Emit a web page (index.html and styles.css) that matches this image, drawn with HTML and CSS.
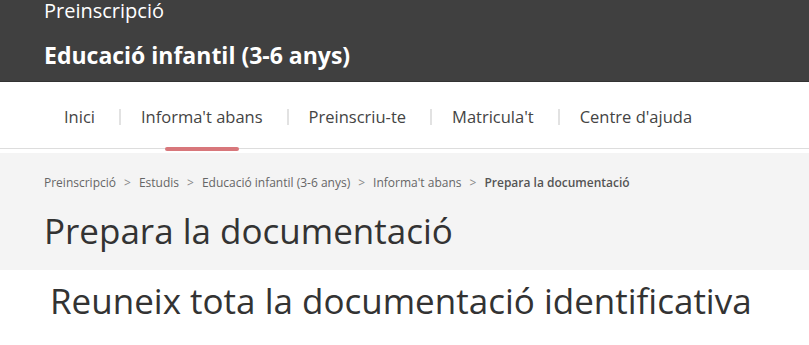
FILE: index.html
```html
<!DOCTYPE html>
<html lang="ca">
<head>
<meta charset="utf-8">
<title>Prepara la documentació</title>
<link rel="stylesheet" href="styles.css">
</head>
<body>
<header class="top">
  <div class="site">Preinscripció</div>
  <div class="section">Educació infantil (3-6 anys)</div>
</header>
<nav class="menu">
  <ul class="menu-list">
    <li class="menu-item">Inici</li>
    <li class="sep"></li>
    <li class="menu-item active">Informa't abans</li>
    <li class="sep"></li>
    <li class="menu-item">Preinscriu-te</li>
    <li class="sep"></li>
    <li class="menu-item">Matricula't</li>
    <li class="sep"></li>
    <li class="menu-item">Centre d'ajuda</li>
  </ul>
</nav>
<section class="band">
  <ol class="crumbs">
    <li>Preinscripció</li>
    <li class="arrow">&gt;</li>
    <li>Estudis</li>
    <li class="arrow">&gt;</li>
    <li>Educació infantil (3-6 anys)</li>
    <li class="arrow">&gt;</li>
    <li>Informa't abans</li>
    <li class="arrow">&gt;</li>
    <li class="current">Prepara la documentació</li>
  </ol>
  <h1 class="title">Prepara la documentació</h1>
</section>
<main class="content">
  <h2 class="subtitle">Reuneix tota la documentació identificativa</h2>
</main>
</body>
</html>
```
FILE: styles.css
```css
* { box-sizing: border-box; }
html, body { margin: 0; padding: 0; }
body {
  font-family: "Open Sans", "Noto Sans", sans-serif;
  background: #fff;
  color: #333;
  overflow: hidden;
}
.top {
  background: #404040;
  color: #fff;
  height: 82px;
  border-bottom: 1px solid #333;
  display: flex;
  flex-direction: column;
  padding: 0 44px;
  overflow: hidden;
}
.site {
  font-size: 20px;
  line-height: 24px;
  margin-top: -1px;
}
.section {
  font-size: 23px;
  font-weight: 700;
  line-height: 30px;
  margin-top: 17px;
}
.menu {
  height: 67px;
  border-bottom: 1px solid #ddd;
  background: #fff;
}
.menu-list {
  list-style: none;
  margin: 0;
  padding: 0 0 0 64px;
  display: flex;
  align-items: center;
  height: 66px;
  gap: 22px;
}
.menu-item {
  font-size: 16.5px;
  color: #444;
  position: relative;
  height: 66px;
  display: flex;
  align-items: center;
  padding-top: 2px;
}
.menu-item.active::after {
  content: "";
  position: absolute;
  left: 24px;
  right: 24px;
  bottom: -3px;
  height: 4px;
  border-radius: 2px;
  background: #d8777b;
}
.sep {
  width: 2px;
  height: 16px;
  background: #e2e2e2;
  margin: 3px -2px 0 2px;
}
.band {
  background: #f4f4f4;
  margin-top: 4px;
  padding: 21px 44px 16px;
}
.crumbs {
  list-style: none;
  margin: 0;
  padding: 0;
  display: flex;
  gap: 8px;
  font-size: 12px;
  line-height: 17px;
  color: #666;
}
.crumbs .arrow { color: #888; }
.crumbs .current { font-weight: 600; color: #555; }
.title {
  margin: 17px 0 0;
  font-size: 35px;
  font-weight: 400;
  line-height: 46px;
  color: #333;
}
.content {
  padding: 0 50px;
}
.subtitle {
  margin: 8px 0 0;
  font-size: 35px;
  font-weight: 400;
  line-height: 46px;
  color: #333;
}
```
